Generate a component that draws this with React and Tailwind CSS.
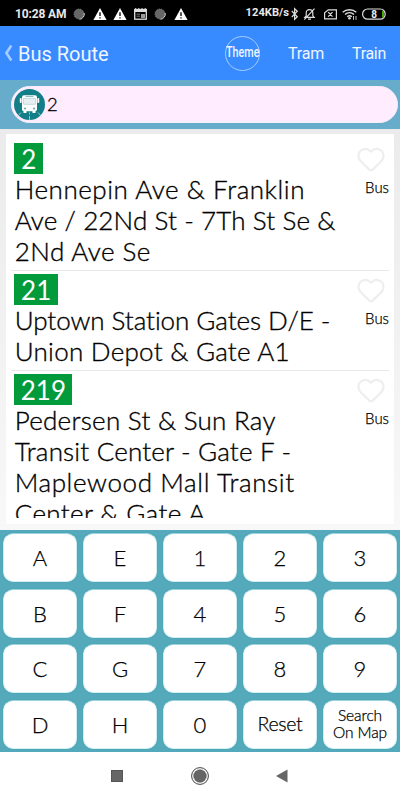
import clsx from 'clsx';
import { Heart } from 'lucide-react';

const routes = [
  {
    number: '2',
    badge: 'w-[29px]',
    lines: [
      { text: 'Hennepin Ave & Franklin', tracking: 'tracking-[0.55px]' },
      { text: 'Ave / 22Nd St - 7Th St Se &', tracking: 'tracking-[0.12px]' },
      { text: '2Nd Ave Se', tracking: 'tracking-[0.45px]' },
    ],
  },
  {
    number: '21',
    badge: 'w-[43.5px]',
    lines: [
      { text: 'Uptown Station Gates D/E -', tracking: 'tracking-[-0.05px]' },
      { text: 'Union Depot & Gate A1', tracking: 'tracking-[0.27px]' },
    ],
  },
  {
    number: '219',
    badge: 'w-[58px]',
    lines: [
      { text: 'Pedersen St & Sun Ray', tracking: 'tracking-[0.27px]' },
      { text: 'Transit Center - Gate F -', tracking: 'tracking-[0.18px]' },
      { text: 'Maplewood Mall Transit', tracking: 'tracking-[0.62px]' },
      { text: 'Center & Gate A', tracking: 'tracking-[0.36px]' },
    ],
  },
];

const keys = [
  'A', 'E', '1', '2', '3',
  'B', 'F', '4', '5', '6',
  'C', 'G', '7', '8', '9',
  'D', 'H', '0', 'Reset', 'Search On Map',
];

const Dot = () => (
  <svg width="12" height="12" viewBox="0 0 12 12">
    <circle cx="6" cy="6" r="5" fill="#666" stroke="#888" strokeWidth="0.8" strokeDasharray="1.2 0.8" />
    <path d="M11.2 5A5.3 5.3 0 0 1 6.5 11.3" fill="none" stroke="#ddd" strokeWidth="0.9" />
  </svg>
);

const Warning = () => (
  <svg width="14" height="12" viewBox="0 0 14 12">
    <path d="M7 0L13.6 12H0.4Z" fill="#fff" />
    <path d="M7 4.2V8M7 9.2V10.5" stroke="#000" strokeWidth="1.3" />
  </svg>
);

const News = () => (
  <svg width="13" height="12" viewBox="0 0 13 12">
    <path d="M1.7 1V0M4.8 1V0M8 1V0M11.2 1V0" stroke="#ddd" />
    <rect x="0.7" y="1.5" width="11.6" height="9.7" fill="none" stroke="#ddd" strokeWidth="1.3" />
    <path d="M1 3H12" stroke="#ddd" strokeWidth="2" />
    <path d="M2.5 6.2H6M2.5 8.2H6" stroke="#777" />
    <rect x="7" y="6" width="4" height="4" fill="#999" />
  </svg>
);

const StatusBar = () => (
  <div className="flex h-[26px] shrink-0 items-center bg-black pl-[15px] pt-px font-['Roboto',sans-serif] font-bold text-[#e8e8e8]">
    <span className="w-[58px] whitespace-nowrap text-[12px] tracking-[-0.15px]">10:28 AM</span>
    <div className="flex items-center">
      <span className="w-5"><Dot /></span>
      <span className="w-5"><Warning /></span>
      <span className="w-[21px]"><Warning /></span>
      <span className="w-5"><News /></span>
      <span className="w-5"><Dot /></span>
      <Warning />
    </div>
    <span className="ml-auto text-[11.2px]">124KB/s</span>
    <svg className="ml-[2px] mr-[14px]" width="95" height="14" viewBox="0 0 95 14" fill="none" stroke="#ddd" strokeWidth="1.2">
      <path d="M0.8 4L6.3 9.8L3.6 12.3V1.7L6.3 4.2L0.8 10" />
      <path d="M13.8 10.3H23.2L21.8 8.8V5.7C21.8 3.7 20.4 2.6 18.5 2.6S15.2 3.7 15.2 5.7V8.8ZM17 12.2H20M13.3 12.7L23.5 1.7" />
      <path d="M37.3 2.8H45.4V11.8H33.6V5.8ZM37.2 5.2L41.5 9.6M41.5 5.2L37.2 9.6" />
      <path d="M51.7 5.3C55.4 1.8 61.6 1.8 65.3 5.3M54 7.5C56.6 5.1 60.4 5.1 63 7.5M56.2 9.8C57.7 8.5 59.3 8.5 60.8 9.8" strokeWidth="1.4" />
      <circle cx="58.5" cy="11.2" r="1.3" fill="#ddd" stroke="none" />
      <path d="M62.5 9V12.8M65 9V12.8" strokeWidth="0.9" />
      <rect x="71.6" y="2" width="22.6" height="10.2" rx="5" />
      <path d="M92 4V10.2" stroke="#43a800" strokeWidth="2" />
      <text x="80.3" y="10.7" fill="#eee" stroke="none" fontSize="10">8</text>
    </svg>
  </div>
);

const Header = () => (
  <header className="flex h-[54px] shrink-0 items-center bg-[#388bff] pl-[4px] pr-[14px] font-['Roboto',sans-serif] font-normal text-[#f0f5ff]">
    <svg width="9" height="18" viewBox="0 0 9 18" fill="none">
      <path d="M7.3 1.5L2.4 9L7.3 16.5" stroke="#a6cbff" strokeWidth="2.6" />
    </svg>
    <h1 className="ml-[5px] mt-[2px] text-[20px]">Bus Route</h1>
    <button className="ml-auto flex size-[35px] items-center justify-center rounded-full border border-[#a6cbff]">
      <span className="-mt-[2px] scale-x-[0.77] text-[14px] font-medium">Theme</span>
    </button>
    <button className="ml-[28px] mt-[2px] w-[36px] whitespace-nowrap text-[16px] tracking-[-0.15px]">Tram</button>
    <button className="ml-[28px] mt-[2px] w-[34px] whitespace-nowrap text-[16px] tracking-[-0.3px]">Train</button>
  </header>
);

const BusIcon = () => (
  <svg width="31" height="31" viewBox="0 0 31 31">
    <circle cx="15.5" cy="15.5" r="15.5" fill="#127f88" />
    <path d="M7 23.5L3 28M24 23.5L28 28M15.5 23.5V25.5M15.5 27V31" stroke="#b9dadd" strokeWidth="0.8" />
    <rect x="8" y="6.2" width="15" height="16" rx="2" fill="#fff" />
    <rect x="5.8" y="9" width="1.8" height="5" rx="0.8" fill="#fff" />
    <rect x="23.4" y="9" width="1.8" height="5" rx="0.8" fill="#fff" />
    <rect x="11.5" y="7.2" width="8" height="0.8" fill="#78adb4" />
    <rect x="9.4" y="9.3" width="12.2" height="6" rx="0.6" fill="#e6f0f2" stroke="#8fbcc2" strokeWidth="0.5" />
    <path d="M9.5 21.5h3v2.5h-3zM18.5 21.5h3v2.5h-3z" fill="#fff" />
    <circle cx="11" cy="19.5" r="0.9" fill="#3f9aa2" />
    <circle cx="20" cy="19.5" r="0.9" fill="#3f9aa2" />
  </svg>
);

const SearchBar = () => (
  <div className="h-[49px] shrink-0 bg-[#67adcb] pl-[11px] pr-[2px] pt-[6px]">
    <div className="flex h-[37px] items-center rounded-full border border-[#f6eefa] bg-[#ffecff] pl-[2px]">
      <BusIcon />
      <span className="-mt-px ml-[2px] text-[18.5px] leading-none [-webkit-text-stroke:0.3px_black]">2</span>
    </div>
  </div>
);

const RouteRow = ({ route }) => (
  <li className="flex border-b border-[#e8e8e8] pb-[3px] pl-[3px] pt-[3px]">
    <div className="flex-1 whitespace-nowrap">
      <div className={clsx('ml-[0.4px] flex h-[31px] items-center justify-center bg-[#029b3c] text-[26px] font-normal leading-none text-white', route.badge)}>
        <span>{route.number}</span>
      </div>
      {route.lines.map((line) => (
        <p
          key={line.text}
          className={clsx('ml-[0.7px] h-[31px] text-[26px] leading-[31px] [font-variant-ligatures:none] [-webkit-text-stroke:0.35px_black]', line.tracking)}
        >
          {line.text}
        </p>
      ))}
    </div>
    <div className="flex w-[40px] flex-col items-end pt-px">
      <Heart className="mr-[3px]" size={30} strokeWidth={1.8} color="#eeeeee" />
      <span className="mt-[3px] text-[15px] leading-[20px] [-webkit-text-stroke:0.25px_black]">Bus</span>
    </div>
  </li>
);

const Keypad = () => (
  <div className="grid h-[222px] shrink-0 grid-cols-5 grid-rows-4 gap-x-[6px] gap-y-[6.5px] bg-[#54a9bb] px-[3px] pb-[3px] pt-[3px]">
    {keys.map((key) => (
      <button
        key={key}
        className={clsx(
          'flex items-center justify-center rounded-[10px] border border-t-[#9fd3dc] border-x-[#d4eef2] border-b-[#d4eef2] bg-white shadow-[0_0_1px_#1094a8] [-webkit-text-stroke:0.25px_black]',
          key === 'Reset' && 'pb-px text-[19.5px] tracking-[-0.3px]',
          key === 'Search On Map' && 'px-[6px] text-[15.5px] leading-[17px] tracking-[-0.1px]',
          key.length === 1 && 'text-[22px]'
        )}
      >
        {key}
      </button>
    ))}
  </div>
);

const NavBar = () => (
  <div className="flex h-12 items-center justify-center bg-white">
    <svg width="178" height="20" viewBox="0 0 178 20">
      <rect x="0.5" y="4.5" width="11" height="11" fill="#666" stroke="#555" />
      <circle cx="89" cy="10" r="8.4" fill="none" stroke="#444" strokeWidth="1" />
      <circle cx="89" cy="10" r="6.3" fill="#666" stroke="#555" strokeWidth="0.6" />
      <path d="M176.5 3.5V16.5L165 10Z" fill="#666" />
    </svg>
  </div>
);

const App = () => (
  <div className="flex h-[800px] w-[400px] flex-col overflow-hidden bg-white font-['Lato','Liberation_Sans',sans-serif] font-light text-black">
    <StatusBar />
    <Header />
    <SearchBar />
    <main className="h-[401px] shrink-0 bg-linear-to-b from-[#ebebeb] to-[#f8f8f8] pb-[6px] pl-[6px] pr-[6px] pt-[5px]">
      <div className="h-full bg-white px-[5px] pb-[6px] pt-[6px]">
        <ul className="h-full overflow-hidden">
          {routes.map((route) => (
            <RouteRow key={route.number} route={route} />
          ))}
        </ul>
      </div>
    </main>
    <Keypad />
    <NavBar />
  </div>
);

export default App;
